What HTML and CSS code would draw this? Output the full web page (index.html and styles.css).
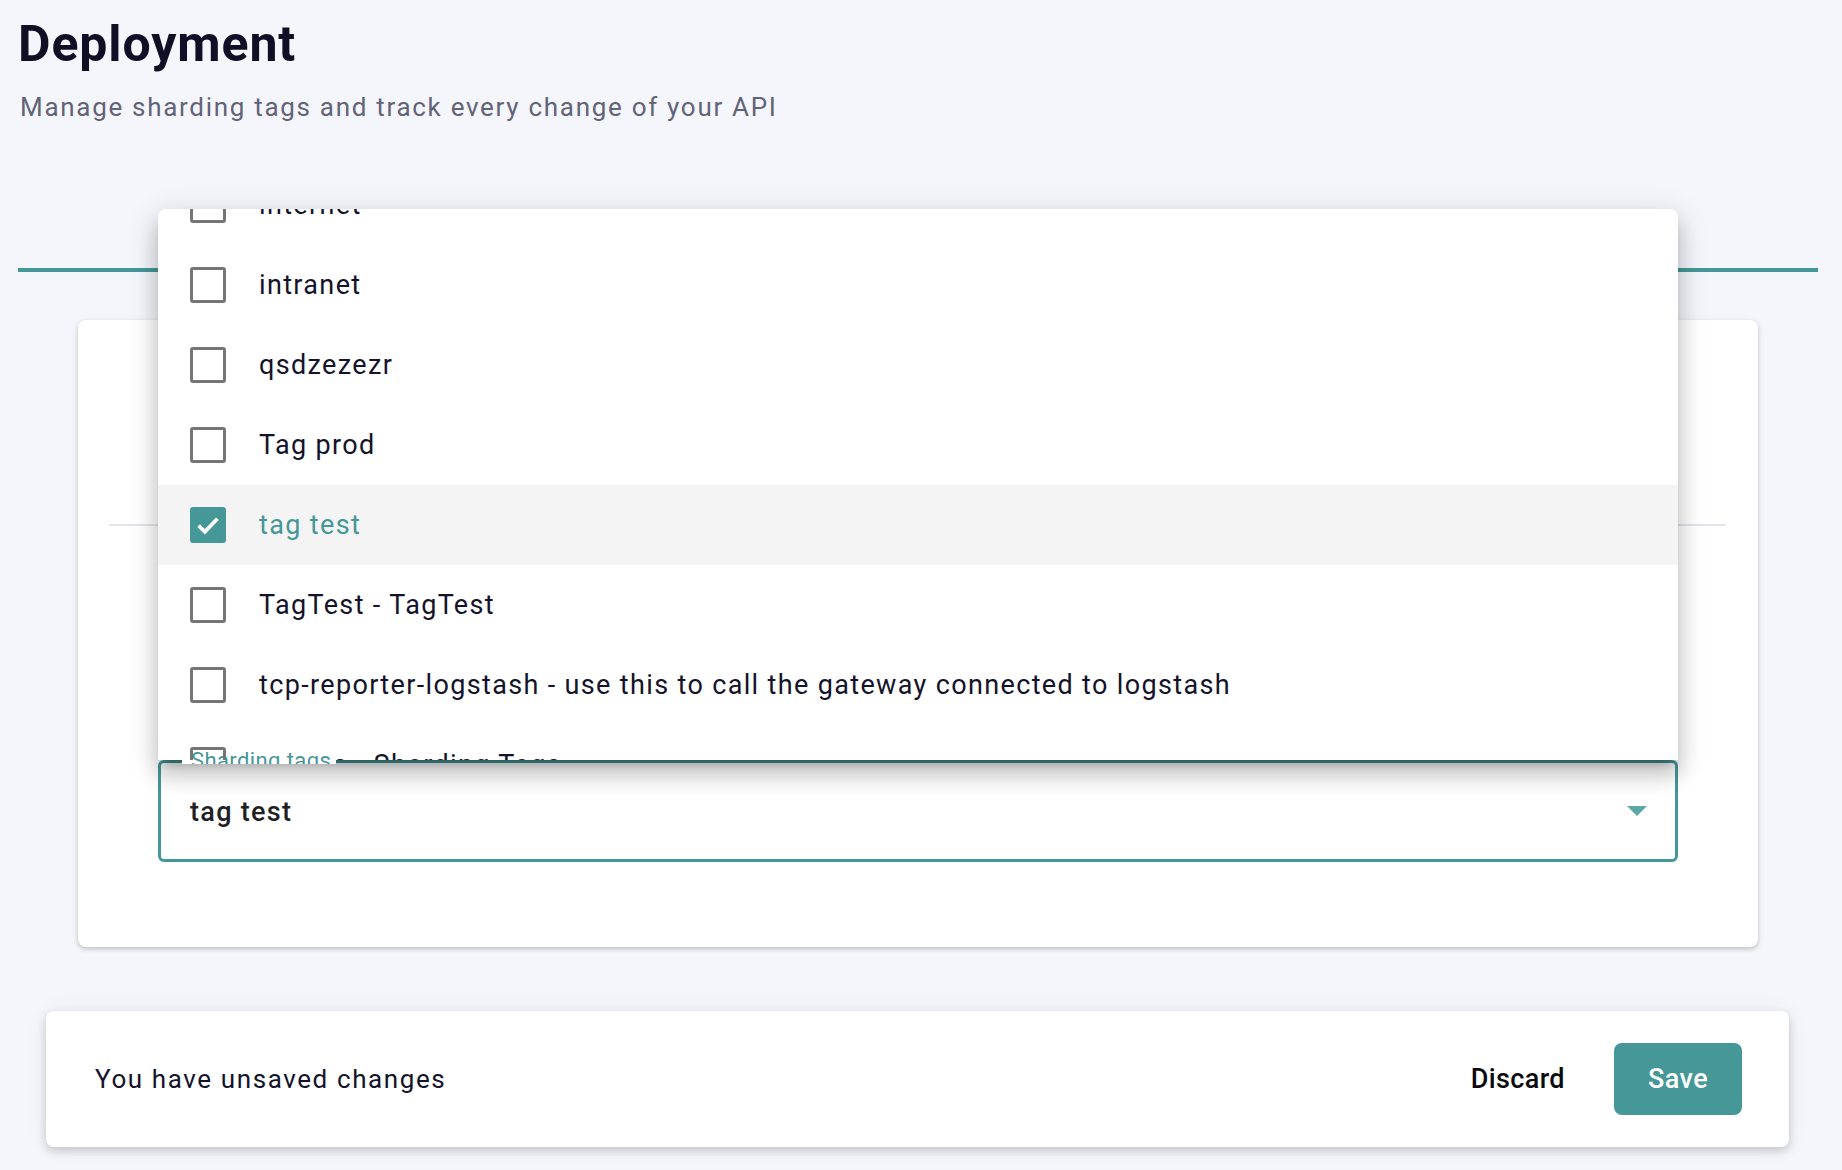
FILE: index.html
```html
<!DOCTYPE html>
<html lang="en">
<head>
<meta charset="utf-8">
<title>Deployment</title>
<link rel="stylesheet" href="styles.css">
</head>
<body>
<div class="page">
  <header class="page-header">
    <h1 class="title">Deployment</h1>
    <p class="subtitle">Manage sharding tags and track every change of your API</p>
  </header>

  <div class="tabs"></div>

  <section class="card">
    <div class="card-top"></div>
    <div class="divider"></div>
    <div class="field-wrap">
      <div class="select">
        <div class="panel">
          <ul class="options">
            <li class="option"><span class="box"></span><span class="opt-text">internet</span></li>
            <li class="option"><span class="box"></span><span class="opt-text">intranet</span></li>
            <li class="option"><span class="box"></span><span class="opt-text">qsdzezezr</span></li>
            <li class="option"><span class="box"></span><span class="opt-text">Tag prod</span></li>
            <li class="option selected"><span class="box checked"><svg viewBox="0 0 24 24" class="check"><path d="M4.5 12.5 9.5 17.5 19.5 7"/></svg></span><span class="opt-text">tag test</span></li>
            <li class="option"><span class="box"></span><span class="opt-text">TagTest - TagTest</span></li>
            <li class="option"><span class="box"></span><span class="opt-text">tcp-reporter-logstash - use this to call the gateway connected to logstash</span></li>
            <li class="option last"><span class="box"></span><span class="opt-text">shards - Sharding Tags</span></li>
          </ul>
        </div>
        <span class="label"><span class="label-text">Sharding tags</span></span>
        <span class="value">tag test</span>
        <span class="arrow"></span>
      </div>
    </div>
  </section>

  <div class="savebar">
    <span class="savebar-text">You have unsaved changes</span>
    <div class="savebar-actions">
      <button class="btn-discard" type="button">Discard</button>
      <button class="btn-save" type="button">Save</button>
    </div>
  </div>
</div>
</body>
</html>
```

FILE: styles.css
```css
* { box-sizing: border-box; }

html, body {
  margin: 0;
  padding: 0;
  background: #f5f6fb;
  font-family: Roboto, "Liberation Sans", Arial, sans-serif;
  overflow: hidden;
}

.page {
  padding: 0 24px 0 18px;
  height: 1170px;
}

.title {
  margin: 0;
  padding-top: 14px;
  font-size: 50px;
  line-height: 60px;
  font-weight: 700;
  color: #100f26;
  letter-spacing: 0.9px;
}

.subtitle {
  margin: 18px 0 0 2px;
  font-size: 26px;
  line-height: 31px;
  color: #626377;
  letter-spacing: 1.7px;
}

.tabs {
  height: 149px;
  border-bottom: 4px solid #459798;
}

.card {
  margin: 48px 60px 0 60px;
  background: #fff;
  border-radius: 8px;
  box-shadow: 0 2px 4px rgba(0, 0, 0, 0.18), 0 1px 10px rgba(0, 0, 0, 0.06);
  padding: 0 32px 85px 31px;
}

.card-top { height: 204px; }

.divider {
  height: 2px;
  background: #e4e4ea;
}

.field-wrap {
  padding: 234px 48px 0 49px;
}

.select {
  position: relative;
  height: 102px;
  border: 3px solid #459798;
  border-radius: 6px;
  display: flex;
  align-items: center;
  padding: 0 28px 0 29px;
}

.value {
  flex: 1;
  font-size: 27px;
  font-weight: 500;
  color: #1f1f24;
  letter-spacing: 1.3px;
  padding-top: 2px;
}

.arrow {
  width: 0;
  height: 0;
  border-left: 10px solid transparent;
  border-right: 10px solid transparent;
  border-top: 10px solid #5ea7a8;
}

.label {
  position: absolute;
  left: 21px;
  top: -19px;
  height: 20px;
  width: 154px;
  background: #fff;
  overflow: hidden;
  padding: 0 0 0 9px;
}

.label-text {
  display: block;
  margin-top: 6px;
  font-size: 22px;
  line-height: 22px;
  color: #459798;
  letter-spacing: 0.4px;
  white-space: nowrap;
}

.panel {
  position: absolute;
  left: -3px;
  right: -3px;
  bottom: calc(100% + 3px);
  height: 551px;
  background: #fff;
  border-radius: 8px 8px 0 0;
  overflow: hidden;
  box-shadow: 0 10px 10px -6px rgba(0, 0, 0, 0.2), 0 16px 20px 2px rgba(0, 0, 0, 0.14), 0 6px 28px 4px rgba(0, 0, 0, 0.12);
}

.options {
  list-style: none;
  margin: -44px 0 0 0;
  padding: 0;
}

.option {
  height: 80px;
  display: flex;
  align-items: center;
  padding-left: 32px;
  font-size: 27px;
  color: #14132b;
  letter-spacing: 1.35px;
  white-space: nowrap;
}

.option.selected {
  background: #f4f4f4;
  color: #459798;
}

.box {
  flex: none;
  width: 36px;
  height: 36px;
  border: 3px solid #757575;
  border-radius: 3px;
  margin-right: 33px;
  display: flex;
  align-items: center;
  justify-content: center;
}

.box.checked {
  background: #459798;
  border-color: #459798;
}

.check {
  width: 30px;
  height: 30px;
  fill: none;
  stroke: #fff;
  stroke-width: 3;
}

.option.last .box {
  position: relative;
  z-index: 2;
}

.savebar {
  margin: 64px 0 0 28px;
  width: 1743px;
  height: 136px;
  background: #fff;
  border-radius: 8px;
  box-shadow: 0 4px 10px rgba(0, 0, 0, 0.18), 0 0 24px rgba(0, 0, 0, 0.05);
  display: flex;
  align-items: center;
  justify-content: space-between;
  padding: 0 47px 0 49px;
}

.savebar-text {
  font-size: 26px;
  color: #14132b;
  letter-spacing: 1.6px;
}

.savebar-actions {
  display: flex;
  align-items: center;
  gap: 35px;
}

.btn-discard, .btn-save {
  font-family: Roboto, "Liberation Sans", Arial, sans-serif;
  font-size: 27px;
  font-weight: 500;
  border: 0;
  border-radius: 8px;
  height: 72px;
  cursor: pointer;
  letter-spacing: 0.4px;
}

.btn-discard {
  background: transparent;
  color: #0b0b0f;
  padding: 0 14px;
}

.btn-save {
  background: #459798;
  color: #fff;
  width: 128px;
}
```
